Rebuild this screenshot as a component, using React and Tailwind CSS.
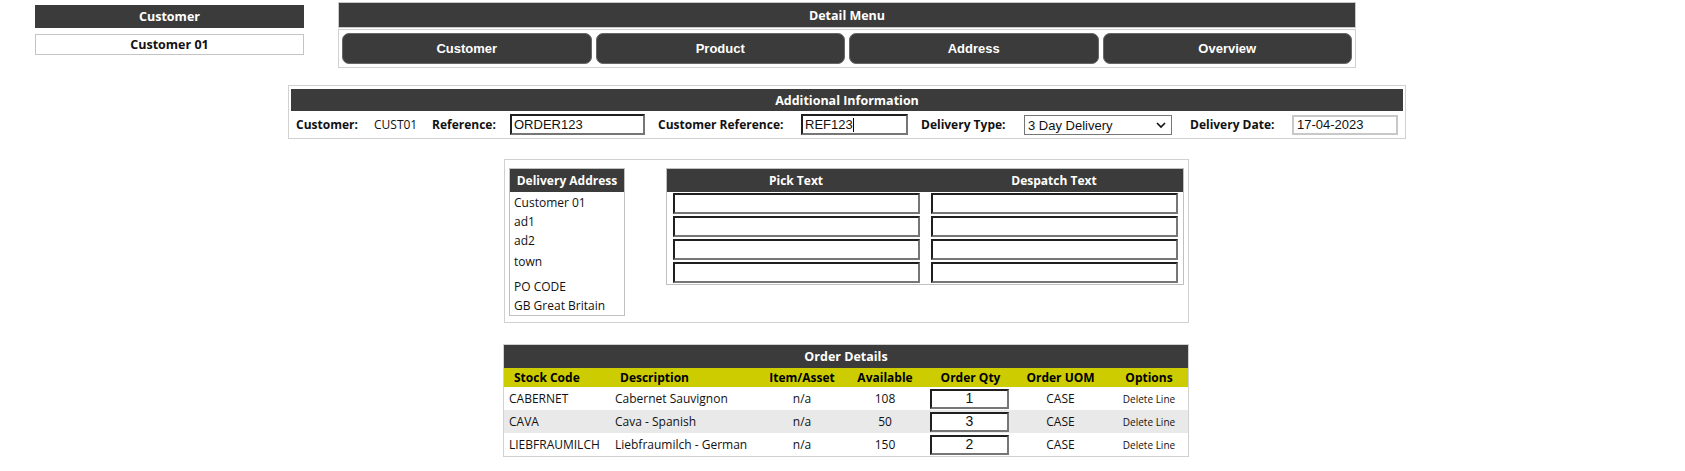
import React from "react";

const inset =
  "border-2 border-t-[#1f1f1f] border-l-[#1f1f1f] border-r-[#767676] border-b-[#767676] bg-white outline-none";

function DarkBar({ children, className = "" }) {
  return (
    <div
      className={
        "bg-[#3b3b3b] text-white font-bold text-[12.5px] flex items-center justify-center " +
        className
      }
    >
      {children}
    </div>
  );
}

const rows = [
  { code: "CABERNET", desc: "Cabernet Sauvignon", avail: "108", qty: "1" },
  { code: "CAVA", desc: "Cava - Spanish", avail: "50", qty: "3" },
  { code: "LIEBFRAUMILCH", desc: "Liebfraumilch - German", avail: "150", qty: "2" },
];

export default function App() {
  return (
    <div className="w-[1685px] h-[471px] bg-white text-[#111] font-['Open_Sans',sans-serif] text-[12px] overflow-hidden">
      {/* Top row */}
      <div className="flex items-start">
        <div className="ml-[35px] w-[269px] mt-[5px]">
          <DarkBar className="h-[23px] pt-[2px]">Customer</DarkBar>
          <div className="mt-[6px] h-[21px] border border-[#c4c4c4] flex items-center justify-center font-bold text-[12.5px] pt-[1px]">
            Customer 01
          </div>
        </div>
        <div className="ml-[34px] w-[1018px] mt-[2px]">
          <DarkBar className="h-[26px] border border-[#c8c8c8] pt-[3px]">Detail Menu</DarkBar>
          <div className="mt-[1px] border border-[#d0d0d0] p-[3px] flex gap-[4px]">
            {["Customer", "Product", "Address", "Overview"].map((b) => (
              <button
                key={b}
                className="flex-1 h-[31px] rounded-[7px] bg-[#3b3b3b] border border-[#686868] text-white font-bold text-[13px] font-['Liberation_Sans',Arial,sans-serif]"
              >
                {b}
              </button>
            ))}
          </div>
        </div>
      </div>

      {/* Additional Information */}
      <div className="ml-[288px] mt-[17px] w-[1118px] border border-[#d0d0d0] px-[2px] pt-[3px]">
        <DarkBar className="h-[22px] pt-[2px]">Additional Information</DarkBar>
        <div className="flex items-center h-[27px] pl-[5px] whitespace-nowrap">
          <span className="w-[78px] font-bold">Customer:</span>
          <span className="w-[58px]">CUST01</span>
          <span className="w-[78px] font-bold">Reference:</span>
          <input
            readOnly
            defaultValue="ORDER123"
            className={"w-[135px] h-[21px] px-[2px] text-[13px] font-['Liberation_Sans',Arial,sans-serif] " + inset}
          />
          <span className="ml-[13px] w-[143px] font-bold">Customer Reference:</span>
          <div className="relative">
            <input
              readOnly
              defaultValue="REF123"
              className={"w-[107px] h-[21px] px-[2px] text-[13px] font-['Liberation_Sans',Arial,sans-serif] " + inset}
            />
            <span className="absolute left-[4px] top-[3px] h-[15px] flex items-center text-[13px] leading-[15px] font-['Liberation_Sans',Arial,sans-serif] text-transparent pointer-events-none">
              REF123
              <span className="inline-block w-[1px] h-[14px] bg-black"></span>
            </span>
          </div>
          <span className="ml-[13px] w-[103px] font-bold">Delivery Type:</span>
          <div className="relative w-[148px] h-[20px]">
            <select
              defaultValue="3"
              className="appearance-none w-full h-full border border-[#767676] bg-white pl-[3px] text-[13px] font-['Liberation_Sans',Arial,sans-serif] outline-none"
            >
              <option value="3">3 Day Delivery</option>
              <option value="1">Next Day Delivery</option>
            </select>
            <svg
              className="absolute right-[6px] top-[6px] pointer-events-none"
              width="10"
              height="8"
              viewBox="0 0 10 8"
            >
              <path d="M1 2 L5 6 L9 2" fill="none" stroke="#111" strokeWidth="1.6" />
            </svg>
          </div>
          <span className="ml-[18px] w-[102px] font-bold">Delivery Date:</span>
          <input
            readOnly
            defaultValue="17-04-2023"
            className="w-[106px] h-[20px] px-[3px] border-2 border-[#c8c8c8] bg-white outline-none text-[13px] font-['Liberation_Sans',Arial,sans-serif]"
          />
        </div>
      </div>

      {/* Address / Pick / Despatch */}
      <div className="ml-[504px] mt-[20px] w-[685px] border border-[#d0d0d0] pl-[4px] pt-[8px] pb-[6px] flex items-start">
        <div className="w-[116px] border border-[#c0c0c0] border-t-0">
          <DarkBar className="h-[24px] border-t border-[#c0c0c0] pt-[1px]">
            <span className="text-[12px]">Delivery Address</span>
          </DarkBar>
          <div className="pl-[4px] pt-[1px] leading-[19px] text-[12px]">
            <div>Customer 01</div>
            <div>ad1</div>
            <div>ad2</div>
            <div className="mt-[2px]">town</div>
            <div className="mt-[6px]">PO CODE</div>
            <div>GB Great Britain</div>
          </div>
        </div>
        <div className="ml-[41px] w-[518px] border border-[#c0c0c0] border-t-0">
          <div className="grid grid-cols-2 h-[24px] pt-[1px] bg-[#3b3b3b] text-white font-bold text-[12px] items-center text-center border-t border-[#c0c0c0]">
            <div>Pick Text</div>
            <div>Despatch Text</div>
          </div>
          <div className="grid grid-cols-2 gap-y-[2px] pt-[1px] pb-[1px]">
            {[0, 1, 2, 3].map((i) => (
              <React.Fragment key={i}>
                <div className="flex justify-center">
                  <input readOnly className={"w-[247px] h-[21px] " + inset} />
                </div>
                <div className="flex justify-center">
                  <input readOnly className={"w-[247px] h-[21px] " + inset} />
                </div>
              </React.Fragment>
            ))}
          </div>
        </div>
      </div>

      {/* Order Details */}
      <div className="ml-[503px] mt-[21px] w-[686px] border border-[#d0d0d0]">
        <DarkBar className="h-[23px] pt-[1px]">Order Details</DarkBar>
        <table className="w-[684px] table-fixed border-collapse">
          <colgroup>
            <col className="w-[107px]" />
            <col className="w-[153px]" />
            <col className="w-[76px]" />
            <col className="w-[90px]" />
            <col className="w-[81px]" />
            <col className="w-[99px]" />
            <col className="w-[78px]" />
          </colgroup>
          <thead>
            <tr className="bg-[#cccc00] h-[19px] text-[12px] font-bold text-black">
              <th className="text-left pl-[10px] font-bold">Stock Code</th>
              <th className="text-left pl-[9px] font-bold">Description</th>
              <th className="text-center font-bold">Item/Asset</th>
              <th className="text-center font-bold">Available</th>
              <th className="text-center font-bold">Order Qty</th>
              <th className="text-center font-bold">Order UOM</th>
              <th className="text-center font-bold">Options</th>
            </tr>
          </thead>
          <tbody>
            {rows.map((r, i) => (
              <tr key={r.code} className={"h-[23px] " + (i === 1 ? "bg-[#e9e9e9]" : "bg-white")}>
                <td className="pl-[5px] pt-[1px] whitespace-nowrap">{r.code}</td>
                <td className="pl-[4px] pt-[1px] whitespace-nowrap">{r.desc}</td>
                <td className="text-center pt-[1px]">n/a</td>
                <td className="text-center pt-[1px]">{r.avail}</td>
                <td className="p-0">
                  <input
                    readOnly
                    defaultValue={r.qty}
                    className={"block w-[79px] h-[20px] text-center text-[14px] font-['Liberation_Sans',Arial,sans-serif] " + inset}
                  />
                </td>
                <td className="text-center pt-[1px]">CASE</td>
                <td className="text-center pt-[1px] text-[10px]">Delete Line</td>
              </tr>
            ))}
          </tbody>
        </table>
      </div>
    </div>
  );
}
